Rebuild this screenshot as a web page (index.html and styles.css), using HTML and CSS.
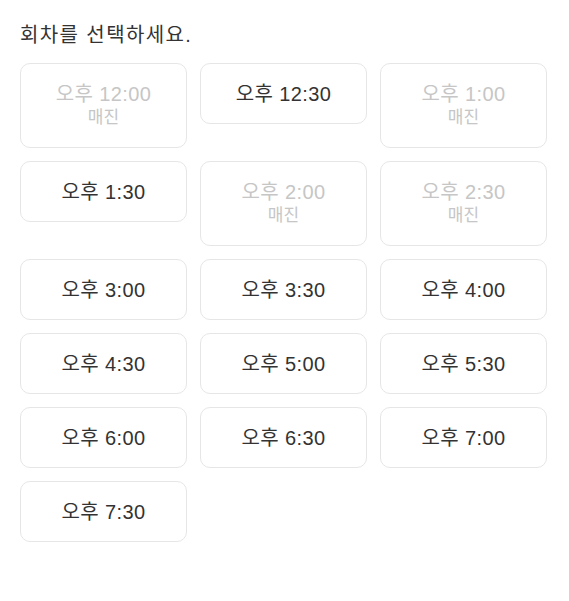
FILE: index.html
```html
<!DOCTYPE html>
<html lang="ko">
<head>
<meta charset="utf-8">
<title>회차 선택</title>
<link rel="stylesheet" href="styles.css">
</head>
<body>
<div class="page">
  <h2 class="title">회차를 선택하세요.</h2>
  <div class="grid">
    <div class="slot sold"><span class="time">오후 12:00</span><span class="status">매진</span></div>
    <div class="slot"><span class="time">오후 12:30</span></div>
    <div class="slot sold"><span class="time">오후 1:00</span><span class="status">매진</span></div>
    <div class="slot"><span class="time">오후 1:30</span></div>
    <div class="slot sold"><span class="time">오후 2:00</span><span class="status">매진</span></div>
    <div class="slot sold"><span class="time">오후 2:30</span><span class="status">매진</span></div>
    <div class="slot"><span class="time">오후 3:00</span></div>
    <div class="slot"><span class="time">오후 3:30</span></div>
    <div class="slot"><span class="time">오후 4:00</span></div>
    <div class="slot"><span class="time">오후 4:30</span></div>
    <div class="slot"><span class="time">오후 5:00</span></div>
    <div class="slot"><span class="time">오후 5:30</span></div>
    <div class="slot"><span class="time">오후 6:00</span></div>
    <div class="slot"><span class="time">오후 6:30</span></div>
    <div class="slot"><span class="time">오후 7:00</span></div>
    <div class="slot"><span class="time">오후 7:30</span></div>
  </div>
</div>
</body>
</html>
```
FILE: styles.css
```css
html, body {
  margin: 0;
  padding: 0;
  background: #ffffff;
}
body {
  font-family: "Liberation Sans", Arial, "Noto Sans CJK KR", sans-serif;
  color: #333333;
}
.page {
  padding: 22px 20px 0 20px;
}
.title {
  margin: 0 0 14px 0;
  height: 27px;
  font-size: 20px;
  line-height: 27px;
  letter-spacing: 1.4px;
  font-weight: normal;
  color: #333333;
}
.grid {
  display: grid;
  grid-template-columns: repeat(3, 167px);
  column-gap: 13px;
  row-gap: 13px;
  align-items: start;
}
.slot {
  box-sizing: border-box;
  border: 1px solid #e6e6e6;
  border-radius: 10px;
  padding: 19px 0 17px 0;
  display: flex;
  flex-direction: column;
  align-items: center;
  background: #ffffff;
}
.time {
  display: block;
  height: 23px;
  font-size: 20px;
  line-height: 23px;
  letter-spacing: 0.4px;
  color: #333333;
}
.status {
  display: block;
  height: 24px;
  font-size: 17px;
  line-height: 24px;
  color: #c6c6c6;
}
.sold .time {
  color: #c6c6c6;
}
```
